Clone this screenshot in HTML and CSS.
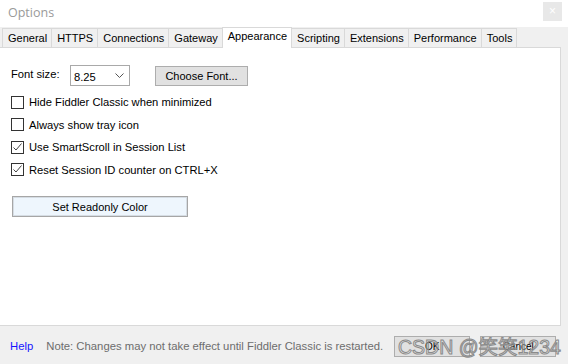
FILE: index.html
```
<!DOCTYPE html>
<html lang="en">
<head>
    <meta charset="UTF-8">
    <title>Options</title>
    <link rel="stylesheet" href="styles.css">
</head>
<body>
    <div class="titlebar">
        <span class="title">Options</span>
        <span class="close">&#215;</span>
    </div>

    <div class="tabs">
        <div class="tab">General</div>
        <div class="tab">HTTPS</div>
        <div class="tab">Connections</div>
        <div class="tab">Gateway</div>
        <div class="tab active">Appearance</div>
        <div class="tab">Scripting</div>
        <div class="tab">Extensions</div>
        <div class="tab">Performance</div>
        <div class="tab">Tools</div>
    </div>

    <div class="panel">
        <div class="font-row">
            <span class="font-label">Font size:</span>
            <div class="select">
                <span>8.25</span>
                <svg width="9" height="6" viewBox="0 0 9 6"><path d="M0.5 0.5 L4.5 4.5 L8.5 0.5" fill="none" stroke="#555" stroke-width="1"/></svg>
            </div>
            <button class="btn choose">Choose Font...</button>
        </div>

        <label class="check"><span class="box"></span>Hide Fiddler Classic when minimized</label>
        <label class="check"><span class="box"></span>Always show tray icon</label>
        <label class="check"><span class="box"><svg width="11" height="11" viewBox="0 0 11 11"><path d="M1.5 5.5 L4 8 L9.5 1.5" fill="none" stroke="#444" stroke-width="1"/></svg></span>Use SmartScroll in Session List</label>
        <label class="check"><span class="box"><svg width="11" height="11" viewBox="0 0 11 11"><path d="M1.5 5.5 L4 8 L9.5 1.5" fill="none" stroke="#444" stroke-width="1"/></svg></span>Reset Session ID counter on CTRL+X</label>

        <button class="btn readonly">Set Readonly Color</button>
    </div>

    <div class="footer">
        <a class="help">Help</a>
        <span class="note">Note: Changes may not take effect until Fiddler Classic is restarted.</span>
        <button class="btn small">OK</button>
        <button class="btn small">Cancel</button>
        <span class="watermark">CSDN @笑笑1234</span>
    </div>
</body>
</html>
```

FILE: styles.css
```
body {
    margin: 0;
    width: 568px;
    height: 364px;
    overflow: hidden;
    background: #f0f0f0;
    font-family: "Liberation Sans", Arial, sans-serif;
    font-size: 11px;
    color: #000;
    position: relative;
}

.titlebar {
    height: 27px;
    background: #fff;
    display: flex;
    align-items: center;
    justify-content: space-between;
    padding: 0 6px 0 8px;
}

.title {
    font-family: "Open Sans", sans-serif;
    font-size: 12.5px;
    color: #9a9a9a;
    margin-top: -3px;
}

.close {
    width: 19px;
    height: 19px;
    background: #e8e8e8;
    color: #fff;
    font-size: 12px;
    text-align: center;
    line-height: 19px;
    margin-top: -4px;
}

.tabs {
    display: flex;
    align-items: flex-end;
    height: 20px;
    padding-left: 2px;
}

.tab {
    height: 18px;
    line-height: 19px;
    padding: 0 4px 0 5px;
    background: #f0f0f0;
    border: 1px solid #d9d9d9;
    border-bottom: none;
    border-right: none;
}

.tab:last-child {
    border-right: 1px solid #d9d9d9;
}

.tab.active {
    height: 20px;
    line-height: 17px;
    background: #fff;
    border-right: 1px solid #d9d9d9;
    margin-bottom: -1px;
    position: relative;
    z-index: 1;
}

.tab.active + .tab {
    border-left: none;
}

.panel {
    width: 561px;
    height: 279px;
    box-sizing: border-box;
    background: #fff;
    border: 1px solid #d9d9d9;
    border-left: none;
    padding: 17px 0 0 11px;
    font-size: 11.2px;
}

.font-row {
    display: flex;
    align-items: center;
    height: 21px;
    margin-bottom: 5px;
}

.font-label {
    width: 59px;
    margin-top: -4px;
}

.select {
    width: 60px;
    height: 21px;
    box-sizing: border-box;
    border: 1px solid #a9a9a9;
    display: flex;
    align-items: center;
    justify-content: space-between;
    padding: 0 5px 0 3px;
}

.select span {
    margin-top: 2px;
}

.btn {
    font-family: inherit;
    font-size: 11px;
    background: #e1e1e1;
    border: 1px solid #adadad;
    color: #000;
    padding: 0;
}

.choose {
    width: 93px;
    height: 20px;
    margin-left: 25px;
}

.check {
    display: flex;
    align-items: center;
    height: 22.5px;
}

.box {
    width: 13px;
    height: 13px;
    box-sizing: border-box;
    border: 1px solid #333;
    background: #fff;
    margin-right: 5px;
    display: flex;
    align-items: center;
    justify-content: center;
}

.readonly {
    display: block;
    width: 176px;
    height: 21px;
    margin: 15px 0 0 1px;
    background: #eef6fd;
    border: 1px solid #a6a6a6;
    box-shadow: inset 0 0 0 1px #d6dde4;
}

.footer {
    display: flex;
    align-items: center;
    height: 34px;
    padding: 3px 0 0 10px;
    font-size: 11.3px;
}

.help {
    color: #1515ff;
    margin-right: 13px;
}

.note {
    color: #6d6d6d;
    margin-right: 11px;
}

.small {
    width: 76px;
    height: 21px;
    margin-right: 10px;
    font-size: 10px;
}

.watermark {
    position: absolute;
    left: 398px;
    top: 331px;
    font-family: "Liberation Sans", "Noto Sans CJK SC", sans-serif;
    font-size: 19.5px;
    color: rgba(255, 255, 255, 0.2);
    -webkit-text-stroke: 1px #8a8a8a;
    white-space: nowrap;
}
```
